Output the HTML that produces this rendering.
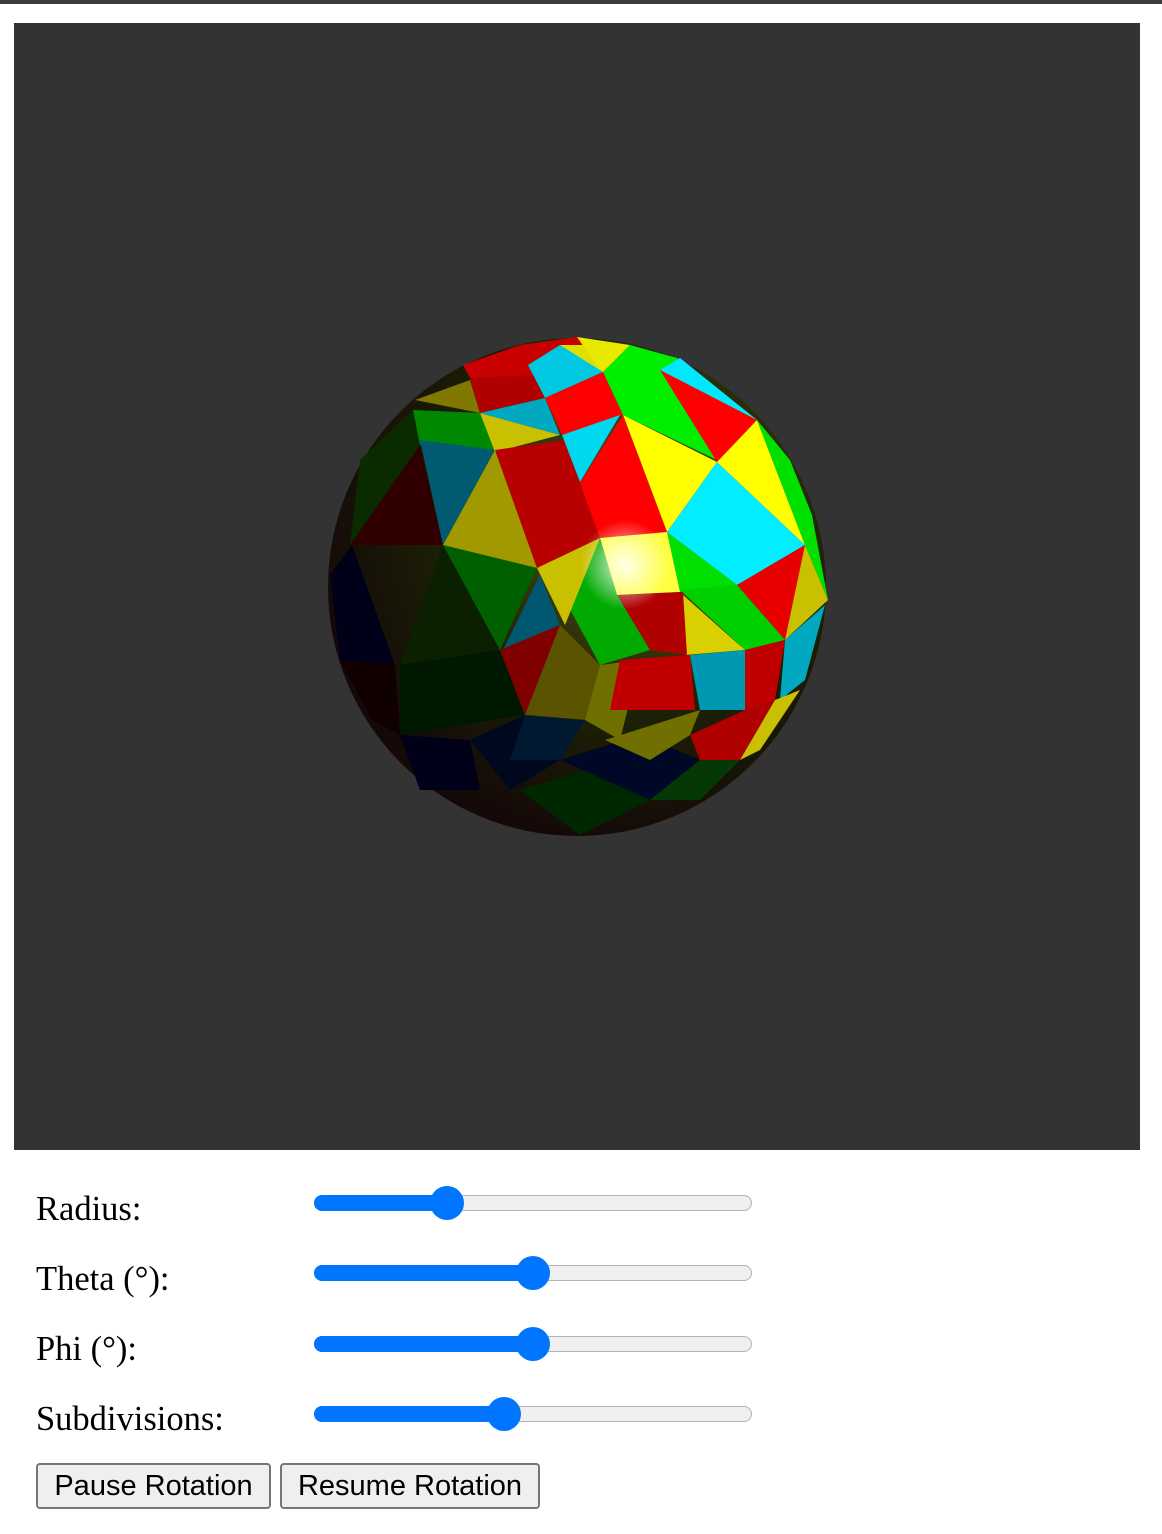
<!DOCTYPE html>
<html><head><meta charset="utf-8"><style>
html,body{margin:0;padding:0;background:#fff;width:1162px;height:1534px;overflow:hidden;position:relative}
.top{position:absolute;left:0;top:0;width:1162px;height:4px;background:#3c3c3c}
.cv{position:absolute;left:14px;top:23px;width:1126px;height:1127px;background:#333}
.lbl{position:absolute;left:36px;font-family:"Liberation Serif",serif;font-size:34.5px;color:#000;line-height:1}
.trk{position:absolute;left:314px;width:438px;height:16px;border:1.5px solid #b2b2b2;border-radius:9px;background:#efefef;box-sizing:border-box}
.fill{position:absolute;left:-1.5px;top:-1.5px;height:16px;background:#0075ff;border-radius:9px 0 0 9px}
.th{position:absolute;width:34px;height:34px;border-radius:50%;background:#0075ff;top:-10.5px}
.btn{position:absolute;top:1463px;height:46px;box-sizing:border-box;border:2px solid #767676;border-radius:4px;background:#efefef;font-family:"Liberation Sans",sans-serif;font-size:29px;line-height:42px;text-align:center;color:#000}
</style></head><body>
<div class="top"></div>
<div class="cv"></div>
<svg style="position:absolute;left:0;top:0" width="1162" height="1150">
<defs>
<radialGradient id="g" cx="640" cy="520" r="330" gradientUnits="userSpaceOnUse">
<stop offset="0" stop-color="#5a5a10"/><stop offset="0.6" stop-color="#1c2006"/><stop offset="1" stop-color="#140808"/>
</radialGradient>
<radialGradient id="hl" cx="625" cy="565" r="45" gradientUnits="userSpaceOnUse">
<stop offset="0" stop-color="#ffffff" stop-opacity="0.9"/><stop offset="1" stop-color="#ffffff" stop-opacity="0"/>
</radialGradient>
</defs>
<circle cx="577" cy="587" r="249" fill="url(#g)"/>
<g stroke-width="0.5" stroke-linejoin="round">
<polygon points="330,575 352,545 395,665 340,660" fill="#000018"/>
<polygon points="340,660 395,665 400,735 372,720" fill="#100000"/>
<polygon points="350,545 420,445 443,545" fill="#300000"/>
<polygon points="360,460 413,410 420,445 350,545" fill="#0a2a00"/>
<polygon points="443,545 537,568 500,650 440,580" fill="#006000"/>
<polygon points="400,665 443,545 500,650" fill="#0a2000"/>
<polygon points="400,665 500,650 525,715 400,735" fill="#001800"/>
<polygon points="400,735 470,740 480,790 420,790" fill="#000018"/>
<polygon points="470,740 525,715 560,760 510,790" fill="#000820"/>
<polygon points="520,790 620,760 650,800 580,835" fill="#002800"/>
<polygon points="560,760 640,735 700,760 650,800" fill="#000828"/>
<polygon points="650,800 700,760 740,760 700,800" fill="#063806"/>
<polygon points="415,400 470,380 480,413" fill="#807800"/>
<polygon points="413,410 480,413 495,450 420,445" fill="#008800"/>
<polygon points="420,440 495,450 443,545" fill="#005a70"/>
<polygon points="443,545 495,450 537,568" fill="#a09a00"/>
<polygon points="470,378 540,375 545,398 480,413" fill="#b00000"/>
<polygon points="480,413 545,398 560,435" fill="#00a8c0"/>
<polygon points="480,413 560,435 495,452" fill="#c8c000"/>
<polygon points="495,450 565,440 580,483 600,538 537,568" fill="#b80000"/>
<polygon points="463,365 520,345 577,337 610,345 600,372 540,375 470,378" fill="#c80000"/>
<polygon points="540,375 600,372 610,345 560,345" fill="#e0e000"/>
<polygon points="528,365 560,345 603,372 545,398" fill="#00c8e0"/>
<polygon points="545,398 603,372 623,415 562,435" fill="#ff0000"/>
<polygon points="562,435 620,415 580,482" fill="#00d8f0"/>
<polygon points="603,372 630,345 677,358 757,420 717,460 623,415" fill="#00ee00"/>
<polygon points="577,337 630,345 603,372 600,370" fill="#e8e800"/>
<polygon points="660,370 680,358 757,420" fill="#00e8ff"/>
<polygon points="660,370 757,420 717,462" fill="#ff0000"/>
<polygon points="623,415 717,462 667,532" fill="#ffff00"/>
<polygon points="580,483 623,415 667,532 600,538" fill="#ff0000"/>
<polygon points="717,462 805,545 737,585 667,532" fill="#00eeff"/>
<polygon points="757,420 805,545 717,462" fill="#ffff00"/>
<polygon points="757,420 790,460 812,515 828,600 805,545" fill="#00e000"/>
<polygon points="737,585 805,545 785,640" fill="#e80000"/>
<polygon points="805,545 828,600 785,640" fill="#c8c000"/>
<polygon points="785,640 825,605 805,680 780,700" fill="#00a8c0"/>
<polygon points="667,532 737,585 680,592" fill="#00e000"/>
<polygon points="600,538 667,532 680,592 617,595" fill="#ffff40"/>
<polygon points="680,590 737,585 785,640 745,650" fill="#00d000"/>
<polygon points="683,595 745,650 685,655" fill="#d8d000"/>
<polygon points="617,595 683,592 687,655 650,650" fill="#b00000"/>
<polygon points="600,538 617,595 650,650 600,665 565,600" fill="#00aa00"/>
<polygon points="537,568 600,538 565,625" fill="#c8c000"/>
<polygon points="503,650 540,575 560,625" fill="#005870"/>
<polygon points="500,650 560,625 525,715" fill="#800000"/>
<polygon points="525,715 560,625 600,665 585,720" fill="#5a5400"/>
<polygon points="585,720 600,665 640,660 620,740" fill="#707000"/>
<polygon points="620,660 690,655 695,710 610,710" fill="#c00000"/>
<polygon points="690,655 745,650 745,710 700,710" fill="#0098b0"/>
<polygon points="745,650 785,640 775,700 745,710" fill="#c00000"/>
<polygon points="605,740 700,710 690,735 650,760" fill="#707000"/>
<polygon points="690,735 745,710 775,700 740,760 700,760" fill="#b00000"/>
<polygon points="740,760 775,700 800,690 760,750" fill="#c8c000"/>
<polygon points="525,715 585,720 560,760 510,760" fill="#001830"/>
</g>
<circle cx="625" cy="565" r="45" fill="url(#hl)"/>
</svg>

<div class="lbl" style="top:1192px">Radius:</div>
<div class="lbl" style="top:1262px">Theta (°):</div>
<div class="lbl" style="top:1332px">Phi (°):</div>
<div class="lbl" style="top:1402px">Subdivisions:</div>

<div class="trk" style="top:1195px"><div class="fill" style="width:134px"></div><div class="th" style="left:115px"></div></div>
<div class="trk" style="top:1265px"><div class="fill" style="width:220px"></div><div class="th" style="left:201px"></div></div>
<div class="trk" style="top:1336px"><div class="fill" style="width:220px"></div><div class="th" style="left:201px"></div></div>
<div class="trk" style="top:1406px"><div class="fill" style="width:192px"></div><div class="th" style="left:172px"></div></div>

<div class="btn" style="left:36px;width:235px">Pause Rotation</div>
<div class="btn" style="left:280px;width:260px">Resume Rotation</div>
</body></html>
